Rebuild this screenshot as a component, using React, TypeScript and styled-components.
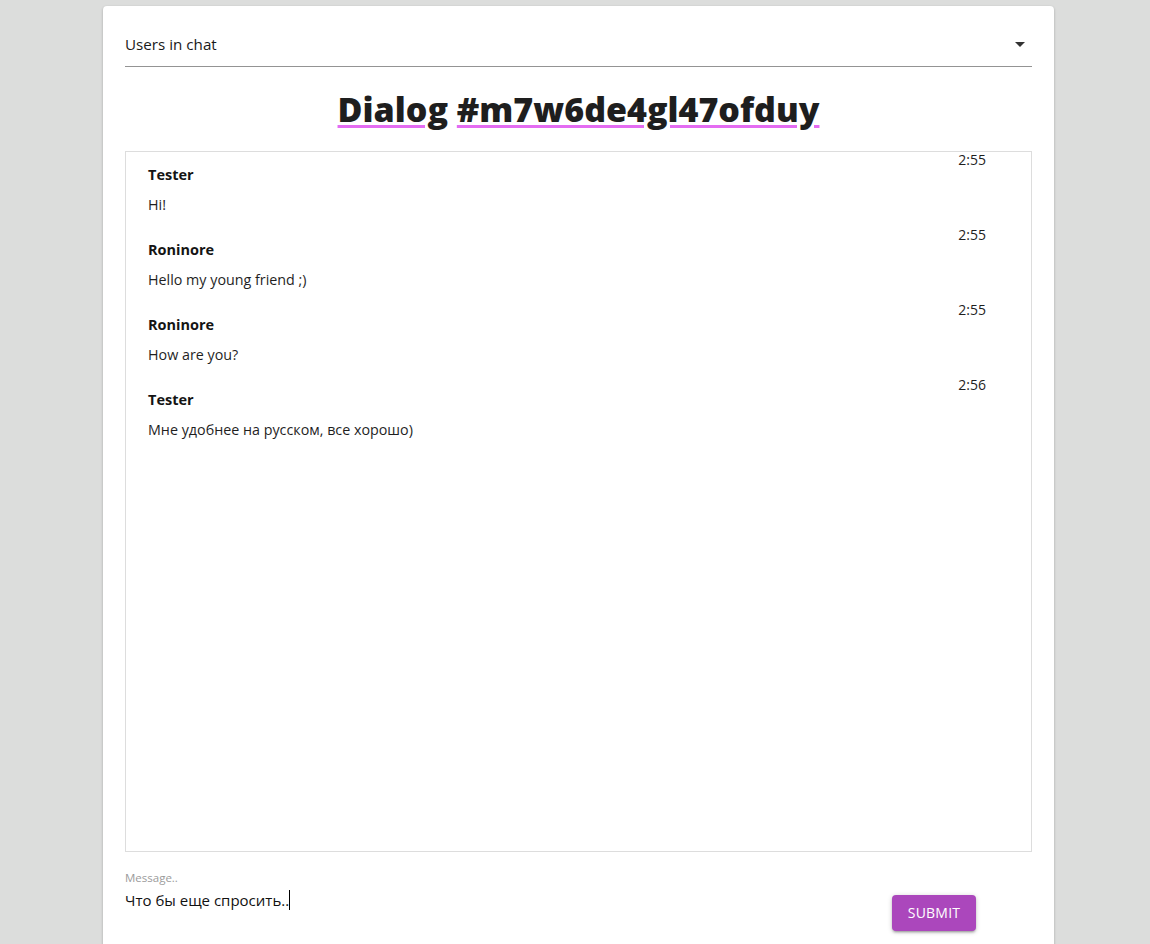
import React from "react";
import styled, { createGlobalStyle } from "styled-components";

const GlobalStyle = createGlobalStyle`
  html, body {
    margin: 0;
    padding: 0;
    background: #dcdddc;
    font-family: "Open Sans", "Noto Sans", sans-serif;
    color: #1c1c1c;
  }
  * { box-sizing: border-box; }
`;

const Page = styled.div`
  padding: 6px 0 0 103px;
  min-height: 944px;
`;

const Card = styled.main`
  width: 951px;
  min-height: 960px;
  background: #ffffff;
  border-radius: 4px 4px 0 0;
  box-shadow: 0 1px 3px rgba(0, 0, 0, 0.2), 0 1px 1px rgba(0, 0, 0, 0.14), 0 2px 1px -1px rgba(0, 0, 0, 0.12);
  padding: 26px 22px 0 22px;
  display: flex;
  flex-direction: column;
`;

const SelectField = styled.div`
  display: flex;
  align-items: flex-start;
  justify-content: space-between;
  padding-bottom: 10px;
  border-bottom: 1px solid #949494;
`;

const SelectLabel = styled.span`
  font-size: 15.2px;
  line-height: 24px;
  color: #1a1a1a;
`;

const ArrowIcon = styled.svg`
  width: 24px;
  height: 24px;
  fill: #333333;
  display: block;
`;

const Title = styled.h1`
  margin: 20px 0 20px 0;
  text-align: center;
  font-size: 34px;
  line-height: 44px;
  font-weight: 800;
  color: #1e1e1e;
`;

const Misspelled = styled.span`
  text-decoration: underline;
  text-decoration-color: #e46cf2;
  text-decoration-thickness: 3px;
  text-underline-offset: 3px;
`;

const MessagesBox = styled.section`
  height: 701px;
  padding-top: 1px;
  border: 1px solid #dddddd;
  display: flex;
  flex-direction: column;
`;

const Message = styled.article`
  display: flex;
  flex-direction: column;
  padding: 0 45px 0 22px;
  margin-bottom: 13px;
`;

const Time = styled.div`
  align-self: flex-end;
  font-size: 14px;
  line-height: 14px;
  height: 14px;
  color: #1f1f1f;
`;

const Author = styled.div`
  margin-top: -2px;
  font-size: 14.5px;
  line-height: 20px;
  font-weight: 700;
  color: #141414;
`;

const Text = styled.div`
  margin-top: 10px;
  font-size: 14.3px;
  line-height: 20px;
  color: #1f1f1f;
`;

const Composer = styled.form`
  display: flex;
  align-items: flex-start;
  margin-top: 19px;
  padding-right: 56px;
`;

const InputField = styled.label`
  flex: 1;
  display: flex;
  flex-direction: column;
`;

const InputLabel = styled.span`
  font-size: 11.5px;
  line-height: 14px;
  color: #9b9b9b;
`;

const InputText = styled.span`
  margin-top: 4px;
  font-size: 15px;
  line-height: 22px;
  color: #111111;
`;

const Caret = styled.span`
  display: inline-block;
  width: 1px;
  height: 20px;
  background: #000;
  vertical-align: -4px;
`;

const SubmitButton = styled.button`
  margin-top: 24px;
  width: 84px;
  height: 36px;
  padding: 0 0 1px 0;
  border: none;
  border-radius: 4px;
  background: #ab47bc;
  color: #ffffff;
  font-family: inherit;
  font-size: 14px;
  letter-spacing: 0.2px;
  text-transform: uppercase;
  box-shadow: 0 1px 5px rgba(0, 0, 0, 0.2), 0 2px 2px rgba(0, 0, 0, 0.14), 0 3px 1px -2px rgba(0, 0, 0, 0.12);
  cursor: pointer;
`;

const messages = [
  { author: "Tester", text: "Hi!", time: "2:55" },
  { author: "Roninore", text: "Hello my young friend ;)", time: "2:55" },
  { author: "Roninore", text: "How are you?", time: "2:55" },
  { author: "Tester", text: "Мне удобнее на русском, все хорошо)", time: "2:56" },
];

export default function App() {
  return (
    <>
      <GlobalStyle />
      <Page>
        <Card>
          <SelectField>
            <SelectLabel>Users in chat</SelectLabel>
            <ArrowIcon viewBox="0 0 24 24">
              <path d="M7 10l5 5 5-5z" />
            </ArrowIcon>
          </SelectField>
          <Title>
            <Misspelled>Dialog</Misspelled> <Misspelled>#m7w6de4gl47ofduy</Misspelled>
          </Title>
          <MessagesBox>
            {messages.map((m, i) => (
              <Message key={i}>
                <Time>{m.time}</Time>
                <Author>{m.author}</Author>
                <Text>{m.text}</Text>
              </Message>
            ))}
          </MessagesBox>
          <Composer onSubmit={(e) => e.preventDefault()}>
            <InputField>
              <InputLabel>Message..</InputLabel>
              <InputText>
                Что бы еще спросить..<Caret />
              </InputText>
            </InputField>
            <SubmitButton type="submit">Submit</SubmitButton>
          </Composer>
        </Card>
      </Page>
    </>
  );
}
